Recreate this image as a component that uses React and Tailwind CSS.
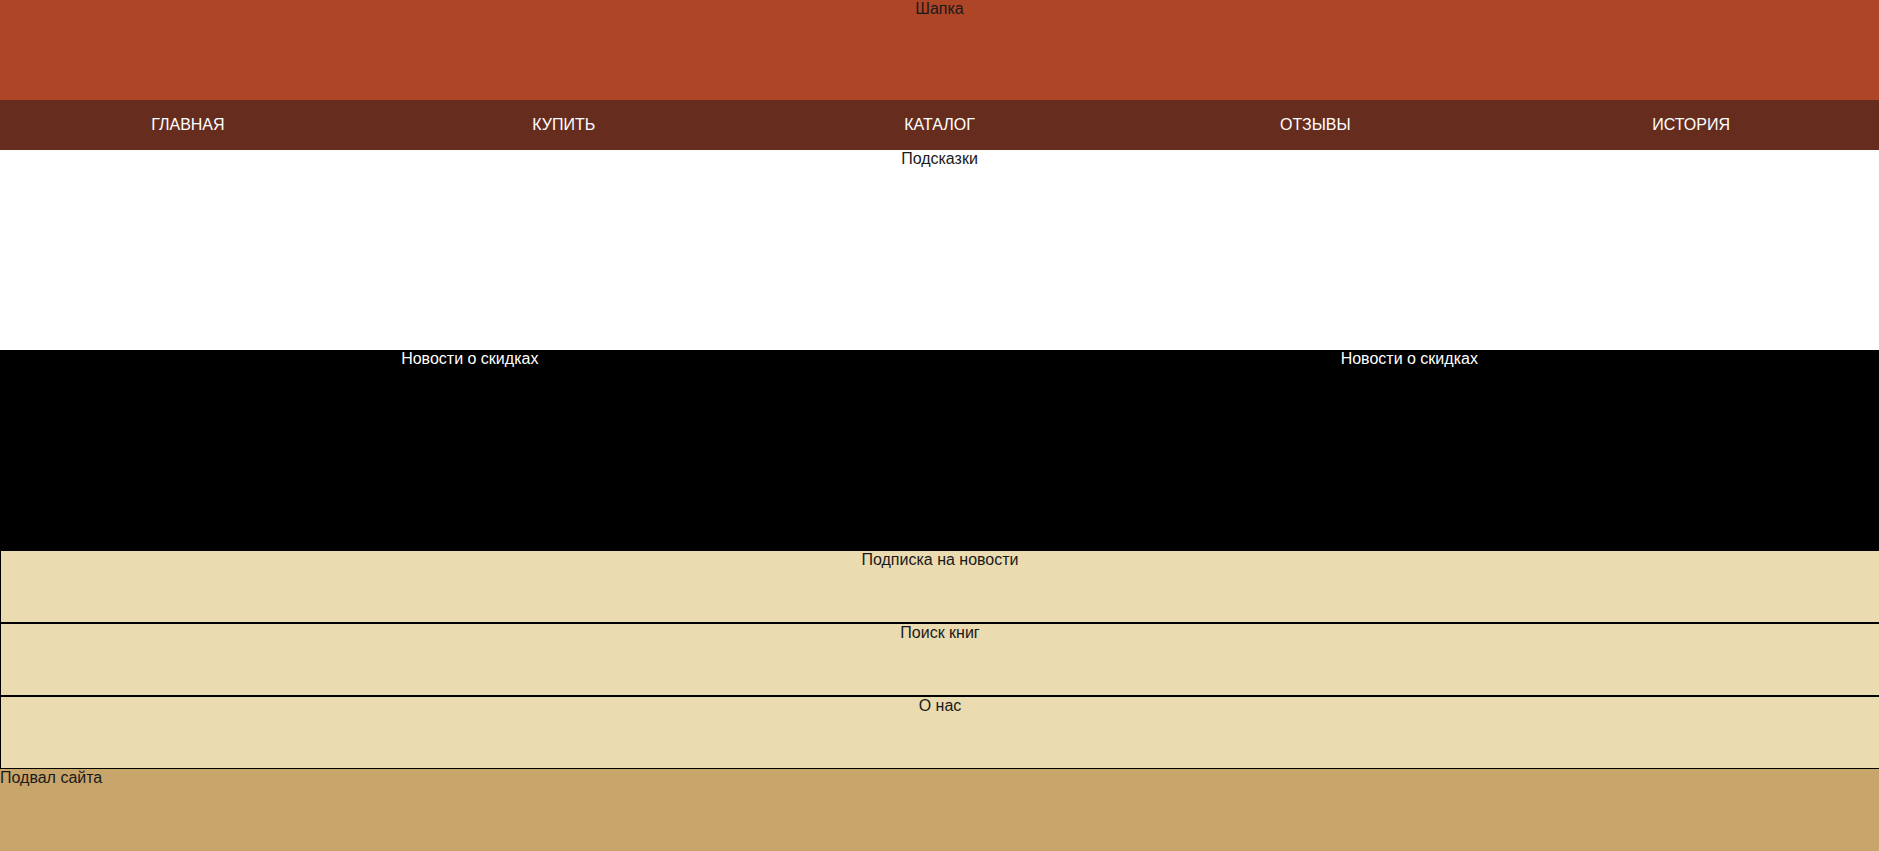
export default function App() {
  const navItems = ['Главная', 'Купить', 'Каталог', 'Отзывы', 'История'];
  const blocks = ['Подписка на новости', 'Поиск книг', 'О нас'];

  return (
    <div className="min-h-screen w-full text-base leading-[18px] text-[#1a1a1a]" style={{ fontFamily: '"Liberation Sans", Arial, sans-serif' }}>
      {/* Header */}
      <header className="h-[100px] bg-[#ae4526] text-center">Шапка</header>

      {/* Navigation */}
      <nav className="grid h-[50px] grid-cols-5 bg-[#662d1e]">
        {navItems.map((item) => (
          <a key={item} href="#" className="flex items-center justify-center uppercase text-white">
            {item}
          </a>
        ))}
      </nav>

      {/* Hints */}
      <section className="h-[200px] bg-white text-center">Подсказки</section>

      {/* Discount news */}
      <section className="grid h-[200px] grid-cols-2 bg-black text-white">
        <div className="text-center">Новости о скидках</div>
        <div className="text-center">Новости о скидках</div>
      </section>

      {/* Info blocks */}
      {blocks.map((b) => (
        <section key={b} className="h-[73px] border-y border-l border-black bg-[#eadbb1] text-center">
          {b}
        </section>
      ))}

      {/* Footer */}
      <footer className="h-[100px] bg-[#c8a56b]">Подвал сайта</footer>
    </div>
  );
}
